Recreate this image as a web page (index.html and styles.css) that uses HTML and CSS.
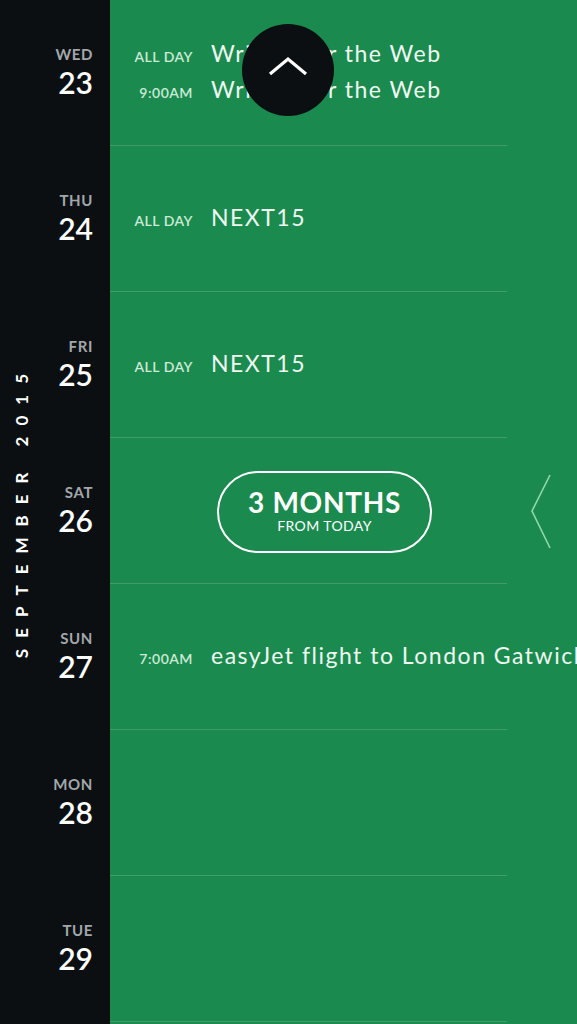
FILE: index.html
```html
<!DOCTYPE html>
<html>
<head>
<meta charset="utf-8">
<link rel="stylesheet" href="styles.css">
</head>
<body>
<div class="app">
  <aside class="sidebar">
    <div class="month"><span class="month-text">SEPTEMBER 2015</span></div>
    <div class="days">
      <div class="day"><span class="dow">WED</span><span class="num">23</span></div>
      <div class="day"><span class="dow">THU</span><span class="num">24</span></div>
      <div class="day"><span class="dow">FRI</span><span class="num">25</span></div>
      <div class="day"><span class="dow">SAT</span><span class="num">26</span></div>
      <div class="day"><span class="dow">SUN</span><span class="num">27</span></div>
      <div class="day"><span class="dow">MON</span><span class="num">28</span></div>
      <div class="day"><span class="dow">TUE</span><span class="num">29</span></div>
    </div>
  </aside>
  <main class="main">
    <div class="row">
      <div class="event"><span class="time">ALL DAY</span><span class="title">Writing for the Web</span></div>
      <div class="event"><span class="time">9:00AM</span><span class="title">Writing for the Web</span></div>
    </div>
    <div class="row">
      <div class="event"><span class="time">ALL DAY</span><span class="title">NEXT15</span></div>
    </div>
    <div class="row">
      <div class="event"><span class="time">ALL DAY</span><span class="title">NEXT15</span></div>
    </div>
    <div class="row row-pill">
      <div class="pill"><span class="pill-big">3 MONTHS</span><span class="pill-small">FROM TODAY</span></div>
    </div>
    <div class="row">
      <div class="event"><span class="time">7:00AM</span><span class="title">easyJet flight to London Gatwick</span></div>
    </div>
    <div class="row"></div>
    <div class="row"></div>

    <button class="up-btn" aria-label="Scroll up">
      <svg width="40" height="20" viewBox="0 0 40 20"><polyline points="2,18 20,3 38,18" fill="none" stroke="#fff" stroke-width="3.2"/></svg>
    </button>
    <div class="side-handle">
      <svg width="22" height="76" viewBox="0 0 22 76"><polyline points="20,1 2,37 20,74" fill="none" stroke="#8fdaa8" stroke-width="1.6"/></svg>
    </div>
  </main>
</div>
</body>
</html>
```

FILE: styles.css
```css
* { box-sizing: border-box; }
html, body {
  margin: 0;
  padding: 0;
  width: 577px;
  height: 1024px;
  overflow: hidden;
  background: #1b8a4f;
  font-family: Lato, "Open Sans", sans-serif;
}
.app {
  display: grid;
  grid-template-columns: 110px 1fr;
  height: 1024px;
}
.sidebar {
  background: #0b0f12;
  display: flex;
}
.month {
  width: 43px;
  display: flex;
  align-items: center;
  justify-content: center;
}
.month-text {
  writing-mode: vertical-rl;
  transform: rotate(180deg);
  color: #ffffff;
  font-size: 17px;
  font-weight: 700;
  letter-spacing: 11px;
  padding-bottom: 11px;
  line-height: 1;
  margin-bottom: 14px;
}
.days {
  flex: 1;
  display: flex;
  flex-direction: column;
}
.day {
  height: 146px;
  display: flex;
  flex-direction: column;
  align-items: flex-end;
  justify-content: center;
  padding-right: 17px;
  padding-bottom: 2px;
}
.dow {
  color: #a3a7ab;
  font-size: 15px;
  font-weight: 700;
  line-height: 18px;
  letter-spacing: 0.6px;
}
.num {
  color: #ffffff;
  font-size: 30px;
  font-weight: 600;
  line-height: 34px;
  margin-top: 2px;
}
.main {
  position: relative;
  overflow: hidden;
}
.row {
  height: 146px;
  margin-right: 70px;
  border-bottom: 1px solid rgba(255, 255, 255, 0.16);
  display: flex;
  flex-direction: column;
  justify-content: center;
  gap: 10px;
  padding-left: 24px;
  padding-bottom: 3px;
}
.event {
  display: flex;
  align-items: baseline;
  white-space: nowrap;
}
.time {
  width: 59px;
  flex: none;
  text-align: right;
  margin-right: 18px;
  color: #cdebd7;
  font-size: 14px;
  font-weight: 600;
  letter-spacing: 0.5px;
}
.title {
  color: #eef8f1;
  font-size: 23px;
  font-weight: 400;
  line-height: 26px;
  letter-spacing: 1.5px;
}
.row-pill {
  align-items: flex-start;
  padding-left: 107px;
  padding-bottom: 0;
  padding-top: 3px;
}
.pill {
  width: 215px;
  height: 82px;
  border: 2.5px solid #ffffff;
  border-radius: 41px;
  display: flex;
  flex-direction: column;
  align-items: center;
  justify-content: center;
  color: #ffffff;
  padding-bottom: 2px;
}
.pill-big {
  font-size: 28px;
  font-weight: 700;
  line-height: 28px;
  letter-spacing: 0.7px;
}
.pill-small {
  font-size: 14px;
  font-weight: 400;
  line-height: 16px;
  letter-spacing: 0.4px;
  margin-top: 2px;
}
.up-btn {
  position: absolute;
  left: 132px;
  top: 24px;
  width: 92px;
  height: 92px;
  border-radius: 50%;
  background: #0b0f12;
  border: none;
  padding: 0;
  display: flex;
  align-items: center;
  justify-content: center;
}
.up-btn svg { margin-top: -8px; }
.side-handle {
  position: absolute;
  left: 420px;
  top: 474px;
  width: 22px;
  height: 76px;
}
```
